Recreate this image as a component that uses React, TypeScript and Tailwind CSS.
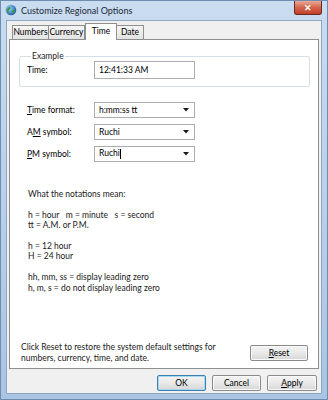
import React from "react";

const font = { fontFamily: 'Lato, "Open Sans", sans-serif' };

function Combo({ value, caret }: { value: string; caret?: boolean }) {
  return (
    <div className="flex items-center w-[101px] h-[16px] bg-white border border-[#abadb3] pl-[4px] pr-[4px]">
      <span className="flex-1 text-[8.5px] leading-none text-black">
        {value}
        {caret && <span className="inline-block w-[1px] h-[10px] bg-black align-middle ml-[0.5px]" />}
      </span>
      <svg width="6" height="4" viewBox="0 0 6 4" className="mr-[1px]">
        <path d="M0 0 L6 0 L3 3.5 Z" fill="#1a1a1a" />
      </svg>
    </div>
  );
}

function Btn({ children, def, w = 49 }: { children: React.ReactNode; def?: boolean; w?: number }) {
  return (
    <div
      className={`flex items-center justify-center h-[16px] rounded-[2px] border text-[8.5px] leading-none text-black bg-gradient-to-b from-[#f4f4f4] via-[#e9e9e9] to-[#d6d6d6] ${
        def ? "border-[#3c7fb1] shadow-[inset_0_0_0_1px_#a8d8f0]" : "border-[#8a8a8a] shadow-[inset_0_0_0_1px_#fafafa]"
      }`}
      style={{ width: w }}
    >
      {children}
    </div>
  );
}

export default function App() {
  return (
    <div className="w-[328px] h-[400px] flex flex-col bg-gradient-to-b from-[#c9dcf0] via-[#b8d0ea] to-[#a9c5e3] border border-[#6f8daf]" style={font}>
      {/* Title bar */}
      <div className="h-[19px] flex items-start shrink-0">
        <div className="flex items-center h-[18px] pl-[4px]">
          <svg width="12" height="12" viewBox="0 0 12 12">
            <defs>
              <radialGradient id="g" cx="0.35" cy="0.35" r="0.7">
                <stop offset="0" stopColor="#9fd4ff" />
                <stop offset="1" stopColor="#1d5fa8" />
              </radialGradient>
            </defs>
            <circle cx="6" cy="6" r="5.3" fill="url(#g)" />
            <path d="M3 3.5 C4.5 2.5 6 3 5.5 4.5 C5 6 3.5 5.5 3.5 7 C3.5 8.5 5 9 4.5 10 C3 9.5 1.5 7.5 2 5.5 Z" fill="#3b9a3b" />
            <path d="M7.5 6 C9 5.5 10.5 6.5 9.5 8.5 C8.5 9.5 7.5 9 7.5 8 Z" fill="#3b9a3b" />
          </svg>
          <span className="ml-[4px] text-[9px] leading-none text-[#1e2a38]">Customize Regional Options</span>
        </div>
        <div className="flex-1" />
        <div className="mr-[5px] w-[28px] h-[14px] rounded-b-[3px] border border-[#6b2a20] border-t-0 bg-gradient-to-b from-[#e9a99a] via-[#d2644c] to-[#c3402a] flex items-center justify-center">
          <span className="text-white text-[9px] font-bold leading-none">✕</span>
        </div>
      </div>

      {/* Client area */}
      <div className="flex-1 mx-[5px] mb-[5px] bg-[#f0f0f0] border border-[#8ea7c2] flex flex-col">
        {/* Tabs */}
        <div className="flex items-end h-[17px] mt-[1px] ml-[5px] relative z-10">
          <div className="w-[37px] h-[14px] border border-[#8e8f8f] border-b-0 bg-gradient-to-b from-[#f6f6f6] to-[#e3e3e3] text-[8.5px] leading-[13px] text-center text-black">Numbers</div>
          <div className="w-[36px] h-[14px] border border-[#8e8f8f] border-b-0 border-l-0 bg-gradient-to-b from-[#f6f6f6] to-[#e3e3e3] text-[8.5px] leading-[13px] text-center text-black">Currency</div>
          <div className="w-[32px] h-[17px] -mb-[1px] border border-[#8e8f8f] border-b-0 bg-white text-[8.5px] leading-[14px] text-center text-black">Time</div>
          <div className="w-[27px] h-[14px] border border-[#8e8f8f] border-b-0 border-l-0 bg-gradient-to-b from-[#f6f6f6] to-[#e3e3e3] text-[8.5px] leading-[13px] text-center text-black">Date</div>
        </div>

        {/* Panel */}
        <div className="ml-[2px] mr-[2px] h-[330px] bg-white border border-[#8e8f8f] flex flex-col pl-[9px] pr-[8px] pt-[11px]">
          <fieldset className="border border-[#d5dfe5] rounded-[2px] h-[36px] pl-[7px] pt-0 w-[291px]">
            <legend className="ml-[4px] px-[1px] text-[8.5px] leading-[10px] text-[#1e1e1e]">Example</legend>
            <div className="flex items-center mt-[0px]">
              <span className="w-[67px] text-[8.5px] leading-none text-black">Time:</span>
              <div className="w-[101px] h-[18px] border border-[#abadb3] bg-white flex items-center pl-[4px] text-[8.5px] leading-none text-black">
                12:41:33 AM
              </div>
            </div>
          </fieldset>

          <div className="flex flex-col gap-[6px] mt-[15px] pl-[8px]">
            <div className="flex items-center">
              <span className="w-[67px] text-[8.5px] leading-none text-black"><u>T</u>ime format:</span>
              <Combo value="h:mm:ss tt" />
            </div>
            <div className="flex items-center">
              <span className="w-[67px] text-[8.5px] leading-none text-black">A<u>M</u> symbol:</span>
              <Combo value="Ruchi" />
            </div>
            <div className="flex items-center">
              <span className="w-[67px] text-[8.5px] leading-none text-black"><u>P</u>M symbol:</span>
              <Combo value="Ruchi" caret />
            </div>
          </div>

          <div className="mt-[27px] pl-[9px] text-[8.5px] leading-[10.4px] text-[#1a1a1a]">
            <div>What the notations mean:</div>
            <div className="h-[10.4px]" />
            <div className="whitespace-pre">h = hour   m = minute   s = second</div>
            <div>tt = A.M. or P.M.</div>
            <div className="h-[10.4px]" />
            <div>h = 12 hour</div>
            <div>H = 24 hour</div>
            <div className="h-[10.4px]" />
            <div>hh, mm, ss = display leading zero</div>
            <div>h, m, s = do not display leading zero</div>
          </div>

          <div className="flex-1" />
          <div className="flex items-center justify-between mb-[4px] pl-[2px] pr-[2px]">
            <div className="text-[8.5px] leading-[11px] text-[#1a1a1a]">
              <div>Click Reset to restore the system default settings for</div>
              <div>numbers, currency, time, and date.</div>
            </div>
            <Btn w={58}>
              <span><u>R</u>eset</span>
            </Btn>
          </div>
        </div>

        {/* Bottom buttons */}
        <div className="flex justify-end gap-[6px] mt-[6px] mr-[4px]">
          <Btn def>OK</Btn>
          <Btn>Cancel</Btn>
          <Btn w={50}>
            <span><u>A</u>pply</span>
          </Btn>
        </div>
      </div>
    </div>
  );
}
